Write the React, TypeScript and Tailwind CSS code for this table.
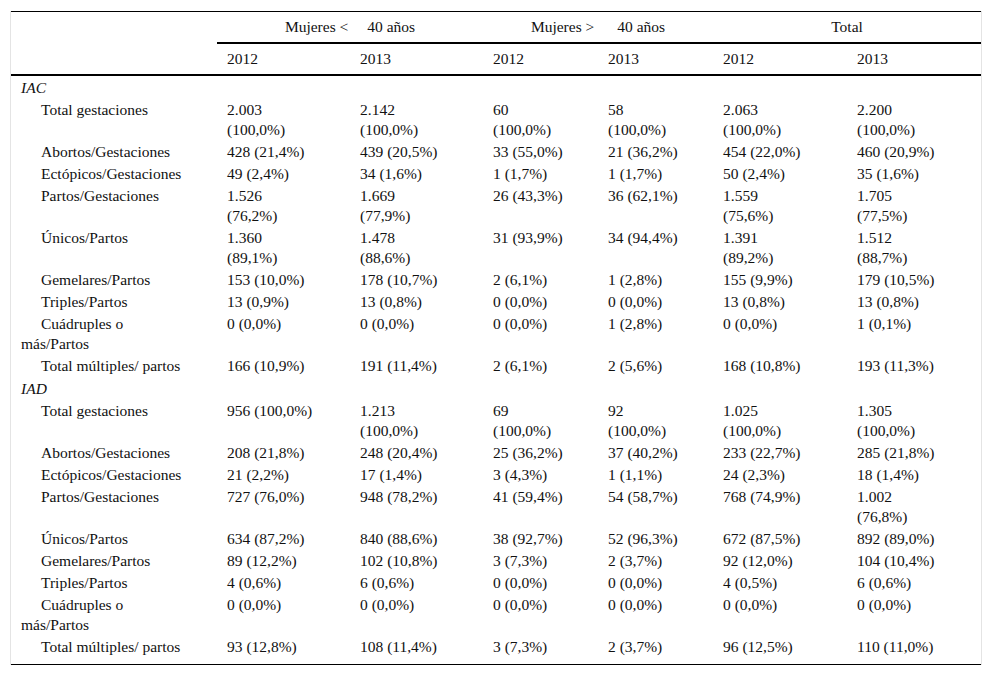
type Row = { label: string; values: string[] };

const sections: { title: string; rows: Row[] }[] = [
  {
    title: "IAC",
    rows: [
      { label: "Total gestaciones", values: ["2.003 (100,0%)", "2.142 (100,0%)", "60 (100,0%)", "58 (100,0%)", "2.063 (100,0%)", "2.200 (100,0%)"] },
      { label: "Abortos/Gestaciones", values: ["428 (21,4%)", "439 (20,5%)", "33 (55,0%)", "21 (36,2%)", "454 (22,0%)", "460 (20,9%)"] },
      { label: "Ectópicos/Gestaciones", values: ["49 (2,4%)", "34 (1,6%)", "1 (1,7%)", "1 (1,7%)", "50 (2,4%)", "35 (1,6%)"] },
      { label: "Partos/Gestaciones", values: ["1.526 (76,2%)", "1.669 (77,9%)", "26 (43,3%)", "36 (62,1%)", "1.559 (75,6%)", "1.705 (77,5%)"] },
      { label: "Únicos/Partos", values: ["1.360 (89,1%)", "1.478 (88,6%)", "31 (93,9%)", "34 (94,4%)", "1.391 (89,2%)", "1.512 (88,7%)"] },
      { label: "Gemelares/Partos", values: ["153 (10,0%)", "178 (10,7%)", "2 (6,1%)", "1 (2,8%)", "155 (9,9%)", "179 (10,5%)"] },
      { label: "Triples/Partos", values: ["13 (0,9%)", "13 (0,8%)", "0 (0,0%)", "0 (0,0%)", "13 (0,8%)", "13 (0,8%)"] },
      { label: "Cuádruples o más/Partos", values: ["0 (0,0%)", "0 (0,0%)", "0 (0,0%)", "1 (2,8%)", "0 (0,0%)", "1 (0,1%)"] },
      { label: "Total múltiples/ partos", values: ["166 (10,9%)", "191 (11,4%)", "2 (6,1%)", "2 (5,6%)", "168 (10,8%)", "193 (11,3%)"] },
    ],
  },
  {
    title: "IAD",
    rows: [
      { label: "Total gestaciones", values: ["956 (100,0%)", "1.213 (100,0%)", "69 (100,0%)", "92 (100,0%)", "1.025 (100,0%)", "1.305 (100,0%)"] },
      { label: "Abortos/Gestaciones", values: ["208 (21,8%)", "248 (20,4%)", "25 (36,2%)", "37 (40,2%)", "233 (22,7%)", "285 (21,8%)"] },
      { label: "Ectópicos/Gestaciones", values: ["21 (2,2%)", "17 (1,4%)", "3 (4,3%)", "1 (1,1%)", "24 (2,3%)", "18 (1,4%)"] },
      { label: "Partos/Gestaciones", values: ["727 (76,0%)", "948 (78,2%)", "41 (59,4%)", "54 (58,7%)", "768 (74,9%)", "1.002 (76,8%)"] },
      { label: "Únicos/Partos", values: ["634 (87,2%)", "840 (88,6%)", "38 (92,7%)", "52 (96,3%)", "672 (87,5%)", "892 (89,0%)"] },
      { label: "Gemelares/Partos", values: ["89 (12,2%)", "102 (10,8%)", "3 (7,3%)", "2 (3,7%)", "92 (12,0%)", "104 (10,4%)"] },
      { label: "Triples/Partos", values: ["4 (0,6%)", "6 (0,6%)", "0 (0,0%)", "0 (0,0%)", "4 (0,5%)", "6 (0,6%)"] },
      { label: "Cuádruples o más/Partos", values: ["0 (0,0%)", "0 (0,0%)", "0 (0,0%)", "0 (0,0%)", "0 (0,0%)", "0 (0,0%)"] },
      { label: "Total múltiples/ partos", values: ["93 (12,8%)", "108 (11,4%)", "3 (7,3%)", "2 (3,7%)", "96 (12,5%)", "110 (11,0%)"] },
    ],
  },
];

// max content width per data column, decides where the values wrap
const valueWidth = ["max-w-[87px]", "max-w-[87px]", "max-w-[74px]", "max-w-[74px]", "max-w-[83px]", "max-w-[83px]"];
const years = ["2012", "2013", "2012", "2013", "2012", "2013"];

export default function App() {
  return (
    <div className="bg-white min-h-[675px] pt-[11px] font-['Liberation_Serif','Times_New_Roman',serif]">
      <div className="mx-[10px] border-x border-[#e4e4e4]">
        <table className="w-[970px] table-fixed border-collapse text-[15.5px] leading-[20px] text-[#111]">
          <colgroup>
            <col className="w-[206px]" />
            <col className="w-[133px]" />
            <col className="w-[133px]" />
            <col className="w-[115px]" />
            <col className="w-[115px]" />
            <col className="w-[134px]" />
            <col className="w-[134px]" />
          </colgroup>
          <thead>
            <tr className="border-t border-black">
              <th className="h-[31px]" />
              <th colSpan={2} className="border-b-2 border-black font-normal text-center align-middle">
                Mujeres &lt;<span className="pl-[19px]">40 años</span>
              </th>
              <th colSpan={2} className="border-b-2 border-black font-normal text-center align-middle">
                Mujeres &gt;<span className="pl-[23px]">40 años</span>
              </th>
              <th colSpan={2} className="border-b-2 border-black font-normal text-center align-middle">
                Total
              </th>
            </tr>
            <tr className="border-b-2 border-black">
              <th className="h-[32px]" />
              {years.map((y, i) => (
                <th key={i} className="pl-[10px] font-normal text-left align-middle">
                  {y}
                </th>
              ))}
            </tr>
          </thead>
          <tbody className="border-b border-black">
            {sections.map((s) => (
              <SectionRows key={s.title} title={s.title} rows={s.rows} />
            ))}
          </tbody>
        </table>
      </div>
    </div>
  );
}

function SectionRows({ title, rows }: { title: string; rows: Row[] }) {
  return (
    <>
      <tr>
        <td colSpan={7} className="pl-[10px] pt-[2px] pb-[1px] italic">
          {title}
        </td>
      </tr>
      {rows.map((r, idx) => (
        <tr key={r.label}>
          <td className={`pl-[10px] pt-[1px] align-top ${idx === rows.length - 1 && title === "IAD" ? "pb-[7px]" : "pb-[1px]"}`}>
            <div className="max-w-[167px] indent-[20px]">{r.label}</div>
          </td>
          {r.values.map((v, i) => (
            <td key={i} className="pl-[10px] py-[1px] align-top">
              <div className={valueWidth[i]}>{v}</div>
            </td>
          ))}
        </tr>
      ))}
    </>
  );
}
